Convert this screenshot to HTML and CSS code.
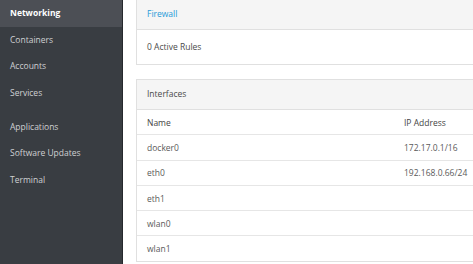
FILE: index.html
```html
<!DOCTYPE html>
<html lang="en">
<head>
  <meta charset="UTF-8" />
  <meta name="viewport" content="width=device-width, initial-scale=1" />
  <title>Networking</title>
  <link rel="stylesheet" href="styles.css">
</head>
<body>
  <nav class="sidebar">
    <a class="nav-item active">Networking</a>
    <a class="nav-item">Containers</a>
    <a class="nav-item">Accounts</a>
    <a class="nav-item">Services</a>
    <div class="nav-sep"></div>
    <a class="nav-item">Applications</a>
    <a class="nav-item">Software Updates</a>
    <a class="nav-item">Terminal</a>
  </nav>

  <main class="content">
    <div class="panel firewall">
      <div class="panel-heading"><a class="link">Firewall</a></div>
      <div class="panel-body">0 Active Rules</div>
    </div>

    <div class="panel">
      <div class="panel-heading">Interfaces</div>
      <table class="iface-table">
        <tr><th class="col-name">Name</th><th>IP Address</th></tr>
        <tr><td>docker0</td><td>172.17.0.1/16</td></tr>
        <tr><td>eth0</td><td>192.168.0.66/24</td></tr>
        <tr><td>eth1</td><td></td></tr>
        <tr><td>wlan0</td><td></td></tr>
        <tr><td>wlan1</td><td></td></tr>
      </table>
    </div>
  </main>
</body>
</html>
```

FILE: styles.css
```css
html, body {
  margin: 0;
  height: 100%;
}
body {
  font-family: 'Open Sans', sans-serif;
  font-size: 8.5px;
  color: #4a4a4a;
  display: flex;
  overflow: hidden;
  background: #fff;
}
.sidebar {
  width: 122px;
  flex-shrink: 0;
  background: #393d42;
  border-right: 1px solid #26292d;
  display: flex;
  flex-direction: column;
}
.nav-item {
  display: block;
  height: 26.67px;
  line-height: 26px;
  padding-left: 10px;
  color: #cfd0d2;
}
.nav-item.active {
  background: #4c4f55;
  color: #fff;
  font-weight: 700;
}
.nav-sep {
  height: 7px;
}
.content {
  flex: 1;
  padding-left: 13px;
  overflow: hidden;
}
.panel {
  width: 360px;
  border: 1px solid #e0e0e0;
  margin-bottom: 14px;
}
.panel.firewall {
  margin-top: -2px;
}
.panel-heading {
  background: #f5f5f5;
  border-bottom: 1px solid #e0e0e0;
  height: 29px;
  line-height: 28px;
  padding-left: 10px;
}
.panel.firewall .panel-heading {
  height: 30px;
  line-height: 30px;
}
.link {
  color: #1f9ad8;
}
.panel-body {
  height: 34px;
  line-height: 34px;
  padding-left: 10px;
}
.iface-table {
  width: 100%;
  border-collapse: collapse;
}
.iface-table th,
.iface-table td {
  height: 24.3px;
  padding: 0 10px;
  text-align: left;
  font-weight: 400;
  border-top: 1px solid #e6e6e6;
}
.iface-table tr:first-child th {
  border-top: none;
}
.iface-table th {
  color: #444;
}
.iface-table td {
  color: #5a5a5a;
}
.col-name {
  width: 237px;
}
```
